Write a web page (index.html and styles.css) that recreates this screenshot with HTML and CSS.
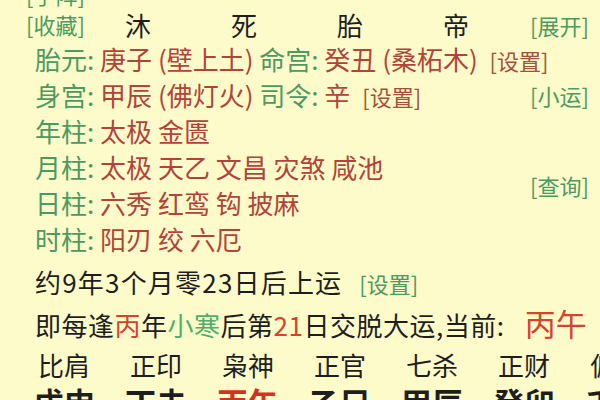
FILE: index.html
```html
<!DOCTYPE html>
<html lang="zh-CN">
<head>
<meta charset="utf-8">
<title>排盘</title>
<link rel="stylesheet" href="styles.css">
</head>
<body>
<div class="board">
  <div class="cut link green">[手阵]</div>
  <div class="stars">
    <span class="link green">[收藏]</span>
    <span class="star">沐</span>
    <span class="star">死</span>
    <span class="star">胎</span>
    <span class="star">帝</span>
  </div>
  <div class="side s-open link green">[展开]</div>
  <div class="line r-tai"><span class="lbl">胎元:</span> <span class="val">庚子 (壁上土)</span> <span class="lbl">命宫:</span> <span class="val">癸丑 (桑柘木)</span> <span class="link brown set">[设置]</span></div>
  <div class="line r-shen"><span class="lbl">身宫:</span> <span class="val">甲辰 (佛灯火)</span> <span class="lbl">司令:</span> <span class="val">辛</span> <span class="link brown set">[设置]</span></div>
  <div class="side s-xy link green">[小运]</div>
  <div class="line r-nian"><span class="lbl">年柱:</span> <span class="val">太极 金匮</span></div>
  <div class="line r-yue"><span class="lbl">月柱:</span> <span class="val">太极 天乙 文昌 灾煞 咸池</span></div>
  <div class="side s-query link green">[查询]</div>
  <div class="line r-ri"><span class="lbl">日柱:</span> <span class="val">六秀 红鸾 钩 披麻</span></div>
  <div class="line r-shi"><span class="lbl">时柱:</span> <span class="val">阳刃 绞 六厄</span></div>
</div>
<div class="fortune">
  <div class="f1">约9年3个月零23日后上运 <span class="link green">[设置]</span></div>
  <div class="f2">即每逢<span class="red">丙</span>年<span class="lgreen">小寒</span>后第<span class="red">21</span>日交脱大运,当前: <span class="cur">丙午</span></div>
</div>
<div class="gods">
  <span>比肩</span><span>正印</span><span>枭神</span><span>正官</span><span>七杀</span><span>正财</span><span>偏印</span>
</div>
<div class="pillars">
  <span>戊申</span><span>丁未</span><span class="hot">丙午</span><span>乙巳</span><span>甲辰</span><span>癸卯</span><span>壬寅</span>
</div>
</body>
</html>
```
FILE: styles.css
```css
html, body {
  margin: 0;
  padding: 0;
}
body {
  width: 600px;
  height: 400px;
  overflow: hidden;
  background: #fdfbca;
  color: #1e1e1e;
  font-family: "Noto Sans CJK SC", "Noto Sans", sans-serif;
}
.board {
  display: grid;
  grid-template-columns: 526px 74px;
  grid-template-rows: 28px 33px repeat(6, 36px);
  margin-top: -20px;
}
.link {
  font-size: 22px;
}
.green {
  color: #4c9a62;
}
.brown {
  color: #a4503c;
}
.cut {
  grid-row: 1;
  grid-column: 1 / -1;
  line-height: 28px;
  padding-left: 26px;
}
.stars {
  grid-row: 2;
  grid-column: 1;
  display: flex;
  align-items: center;
  padding-left: 26px;
  line-height: 33px;
}
.stars .link {
  width: 59px;
}
.star {
  width: 106px;
  text-align: center;
  font-size: 26px;
  color: #1e1e1e;
}
.side {
  grid-column: 2;
  padding-left: 4px;
  display: flex;
  align-items: center;
  white-space: nowrap;
}
.s-open { grid-row: 2; }
.s-xy { grid-row: 4; }
.s-query { grid-row: 6 / span 2; }
.line {
  grid-column: 1;
  padding-left: 35px;
  font-size: 26px;
  line-height: 36px;
  white-space: nowrap;
}
.r-tai { grid-row: 3; grid-column: 1 / -1; }
.r-shen { grid-row: 4; }
.r-nian { grid-row: 5; }
.r-yue { grid-row: 6; }
.r-ri { grid-row: 7; }
.r-shi { grid-row: 8; }
.lbl {
  color: #4c9a62;
}
.val {
  color: #b0443a;
}
.set {
  margin-left: 6px;
}
.fortune {
  padding-left: 35px;
  font-size: 26px;
  white-space: nowrap;
}
.f1 {
  margin-top: 7px;
  height: 36px;
  line-height: 36px;
  letter-spacing: 1.2px;
}
.f1 .link {
  margin-left: 10px;
  letter-spacing: 0;
}
.f2 {
  height: 46px;
  line-height: 46px;
  letter-spacing: 0.5px;
}
.red {
  color: #d5432e;
}
.lgreen {
  color: #4fae6a;
}
.cur {
  font-size: 31px;
  color: #d5432e;
  margin-left: 14px;
  letter-spacing: 0;
}
.gods, .pillars {
  display: grid;
  grid-template-columns: repeat(7, 92px);
  padding-left: 18px;
  text-align: center;
  white-space: nowrap;
}
.gods {
  font-size: 26px;
  height: 38px;
  line-height: 38px;
}
.pillars {
  margin-top: 2px;
  font-size: 31px;
  font-weight: bold;
  line-height: 32px;
}
.hot {
  color: #d0331f;
}
```
